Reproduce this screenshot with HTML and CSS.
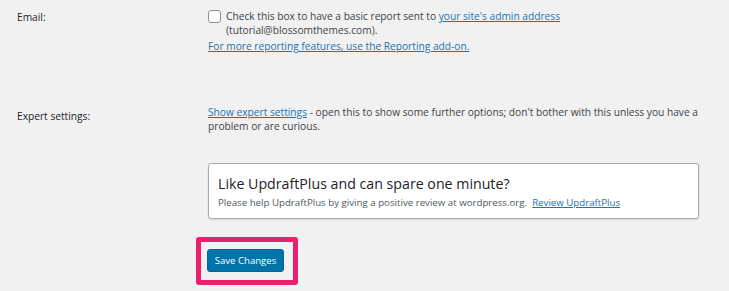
FILE: index.html
```html
<!DOCTYPE html>
<html>
<head>
    <title>UpdraftPlus Settings</title>
    <link rel="stylesheet" href="styles.css">
</head>
<body>
    <div class="form-table">
        <div class="row row-email">
            <div class="label">Email:</div>
            <div class="field">
                <label class="check-line">
                    <input type="checkbox" class="checkbox">
                    <span>Check this box to have a basic report sent to <a href="#">your site's admin address</a><br>(tutorial@blossomthemes.com).</span>
                </label>
                <a href="#" class="more-link">For more reporting features, use the Reporting add-on.</a>
            </div>
        </div>

        <div class="row row-expert">
            <div class="label">Expert settings:</div>
            <div class="field">
                <p class="expert-text"><a href="#">Show expert settings</a> - open this to show some further options; don't bother with this unless you have a problem or are curious.</p>
            </div>
        </div>

        <div class="row row-review">
            <div class="label"></div>
            <div class="field">
                <div class="review-box">
                    <h3>Like UpdraftPlus and can spare one minute?</h3>
                    <p>Please help UpdraftPlus by giving a positive review at wordpress.org. &nbsp;<a href="#">Review UpdraftPlus</a></p>
                </div>
            </div>
        </div>
    </div>

    <div class="submit">
        <span class="highlight">
            <button type="button" class="button-primary">Save Changes</button>
        </span>
    </div>
</body>
</html>
```

FILE: styles.css
```css
body {
    margin: 0;
    background-color: #f1f1f1;
    color: #3c434a;
    font-family: 'Open Sans', 'Segoe UI', sans-serif;
    font-size: 10.2px;
    line-height: 14px;
}

a {
    color: #2271b1;
}

.form-table {
    padding-top: 9px;
}

.row {
    display: grid;
    grid-template-columns: 191px 496px;
    padding-left: 17px;
}

.label {
    color: #1d2327;
    padding-top: 1px;
}

.row-email {
    height: 96px;
}

.check-line {
    display: flex;
    align-items: flex-start;
}

.checkbox {
    -webkit-appearance: none;
    appearance: none;
    width: 13px;
    height: 13px;
    margin: 1px 5px 0 0;
    flex-shrink: 0;
    background: #fff;
    border: 1px solid #8c8f94;
    border-radius: 3px;
}

.more-link {
    display: inline-block;
    margin-top: 2px;
}

.row-expert {
    height: 58px;
}

.row-expert .label {
    padding-top: 4px;
}

.expert-text {
    margin: 0;
}

.review-box {
    width: 471px;
    background: #fff;
    border: 1px solid #a7aaad;
    border-radius: 3px;
    box-shadow: 0 1px 2px rgba(0, 0, 0, 0.12);
    padding: 10px 9px 8px;
    height: 36px;
}

.review-box h3 {
    margin: 0;
    font-size: 14.2px;
    font-weight: 500;
    line-height: 20px;
    color: #1d2327;
}

.review-box p {
    margin: 2px 0 0;
    font-size: 9.7px;
    color: #50575e;
}

.submit {
    padding: 18px 0 0 196px;
}

.highlight {
    display: inline-block;
    border: 5px solid #ec1f6c;
    border-radius: 3px;
    padding: 7px 9px 8px 6px;
}

.button-primary {
    display: block;
    height: 23px;
    width: 77px;
    padding: 0;
    background: #0073aa;
    border: 1px solid #006799;
    border-radius: 3px;
    color: #fff;
    font-family: 'Open Sans', sans-serif;
    font-size: 9.6px;
}
```
